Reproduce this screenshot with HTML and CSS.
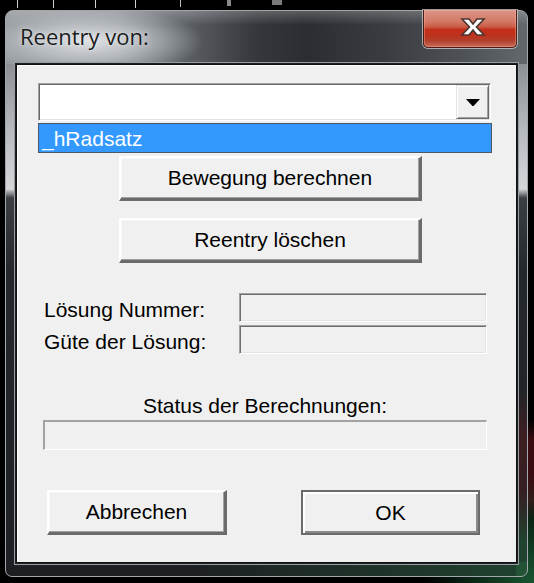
FILE: index.html
```html
<!DOCTYPE html>
<html lang="de">
<head>
<meta charset="utf-8">
<title>Reentry von:</title>
<link rel="stylesheet" href="styles.css">
</head>
<body>
<div class="window">
  <div class="titlebar">
    <span class="title">Reentry von:</span>
    <div class="close" aria-label="Schließen">
      <svg width="26" height="20" viewBox="-2 -2 26 20"><polygon points="0,0 7,0 11,5 15,0 22,0 14.5,8 22,16 15,16 11,11 7,16 0,16 7.5,8" fill="#fff" stroke="#4a3632" stroke-width="1.6" stroke-linejoin="miter"/></svg>
    </div>
  </div>
  <div class="client">
    <div class="combo">
      <div class="combo-btn">
        <svg width="14" height="7" viewBox="0 0 14 7"><polygon points="0,0 14,0 7.6,7 6.4,7" fill="#000"/></svg>
      </div>
      <div class="combo-list"><div class="combo-item">_hRadsatz</div></div>
    </div>
    <div class="btn btn-action">Bewegung berechnen</div>
    <div class="btn btn-action btn-second">Reentry löschen</div>
    <div class="rows">
      <div class="row"><span class="label">Lösung Nummer:</span><div class="field"></div></div>
      <div class="row"><span class="label">Güte der Lösung:</span><div class="field"></div></div>
    </div>
    <div class="status-label">Status der Berechnungen:</div>
    <div class="status-field"></div>
    <div class="footer">
      <div class="btn btn-cancel">Abbrechen</div>
      <div class="btn btn-ok">OK</div>
    </div>
  </div>
</div>
</body>
</html>
```

FILE: styles.css
```css
html, body {
  margin: 0;
  padding: 0;
}

body {
  width: 534px;
  height: 583px;
  overflow: hidden;
  font-family: "Liberation Sans", Arial, sans-serif;
  font-size: 21px;
  color: #000;
  background:
    linear-gradient(#cfcfcf, #cfcfcf) 17px 0 / 1px 8px no-repeat,
    linear-gradient(#cfcfcf, #cfcfcf) 53px 0 / 1px 8px no-repeat,
    linear-gradient(#cfcfcf, #cfcfcf) 95px 0 / 1px 8px no-repeat,
    linear-gradient(#cfcfcf, #cfcfcf) 135px 0 / 1px 8px no-repeat,
    linear-gradient(#bdbdbd, #bdbdbd) 180px 0 / 1px 7px no-repeat,
    linear-gradient(#8a8a8a, #8a8a8a) 227px 0 / 4px 6px no-repeat,
    linear-gradient(#7a7a7a, #7a7a7a) 272px 0 / 10px 5px no-repeat,
    radial-gradient(circle at 534px 583px, rgba(28, 95, 55, 0.9), rgba(28, 95, 55, 0) 110px),
    linear-gradient(to bottom, rgba(0,0,0,0) 420px, rgba(70, 14, 20, 0.8) 440px, rgba(70, 14, 20, 0.8) 500px, rgba(0,0,0,0) 520px) right top / 6px 100% no-repeat,
    #000;
}

/* ---------- window frame ---------- */
.window {
  box-sizing: border-box;
  margin: 10px 0 0 5px;
  width: 523px;
  height: 567px;
  border: 1px solid #a2a7ac;
  border-radius: 8px 8px 7px 7px;
  padding: 0 10px 13px 10px;
  display: flex;
  flex-direction: column;
  background:
    linear-gradient(to bottom, rgba(0,0,0,0) 380px, rgba(95, 25, 30, 0.45) 420px, rgba(95, 25, 30, 0.35) 480px, rgba(35, 95, 60, 0.55) 530px, rgba(35, 95, 60, 0.6) 100%) right top / 11px 100% no-repeat,
    linear-gradient(to right, rgba(0,0,0,0) 35%, rgba(35, 100, 60, 0.5) 100%) left bottom / 100% 14px no-repeat,
    linear-gradient(to bottom, rgba(0,0,0,0) 0, rgba(0,0,0,0) 53px, #8c9095 53px, #b7babe 120px, #d5d7d9 178px, #3b3e42 187px, #25282b 260px, #1d1f22 100%),
    radial-gradient(ellipse 115px 36px at 82px 30px, rgba(226, 229, 232, 0.95) 0%, rgba(200, 204, 208, 0.7) 50%, rgba(160, 165, 170, 0) 100%),
    linear-gradient(to bottom, rgba(255,255,255,0.22) 0, rgba(255,255,255,0) 14px),
    linear-gradient(to right, #8f9498 0, #80858a 110px, #565a5f 190px, #34383c 250px, #2a2d31 300px, #393d41 380px, #4c5054 450px, #63686c 100%);
}

.titlebar {
  height: 53px;
  flex: none;
  margin: 0 -10px;
  padding: 0 10px 0 14px;
  display: flex;
  align-items: flex-start;
  justify-content: space-between;
}

.title {
  font-family: "Open Sans", "Noto Sans", sans-serif;
  font-size: 22px;
  line-height: 30px;
  padding-top: 10px;
  color: #1b1c1d;
  text-shadow: 0 0 6px rgba(255, 255, 255, 0.55), 0 0 2px rgba(255, 255, 255, 0.5);
}

.close {
  box-sizing: border-box;
  margin-top: -1px;
  width: 94px;
  height: 38px;
  padding: 0 0 4px 6px;
  display: flex;
  align-items: center;
  justify-content: center;
  border: 1px solid #4a1e16;
  border-top: none;
  border-radius: 0 0 5px 5px;
  box-shadow: 0 0 0 1px rgba(205, 208, 211, 0.75), inset 0 0 0 1px rgba(255, 190, 175, 0.35);
  background: linear-gradient(to bottom, #dc9686 0%, #d27a67 30%, #cb5b45 46%, #c4301a 52%, #bf2f1a 66%, #b23f2c 82%, #c86a58 100%);
}

/* ---------- client area ---------- */
.client {
  flex: 1;
  position: relative;
  display: flex;
  flex-direction: column;
  align-items: flex-start;
  background: #f0f0f0;
  border: 1px solid #0f1113;
  box-shadow: 0 0 0 1px #1c1e21, 0 0 0 2px #989da2, inset 1px 1px 0 #ffffff;
}

/* combo box */
.combo {
  box-sizing: border-box;
  position: relative;
  margin: 18px 0 0 21px;
  width: 453px;
  height: 38px;
  padding: 1px;
  display: flex;
  justify-content: flex-end;
  background: #fff;
  border: 1px solid;
  border-color: #a0a0a0 #ffffff #ffffff #a0a0a0;
  box-shadow: inset 1px 1px 0 #696969, inset -1px -1px 0 #e3e3e3;
}

.combo-btn {
  box-sizing: border-box;
  width: 33px;
  height: 34px;
  display: flex;
  align-items: center;
  justify-content: center;
  padding-top: 1px;
  background: #f0f0f0;
  border: 1px solid;
  border-color: #e3e3e3 #696969 #696969 #e3e3e3;
  box-shadow: inset 1px 1px 0 #ffffff, inset -1px -1px 0 #a0a0a0;
}

.combo-list {
  position: absolute;
  left: -1px;
  top: 39px;
  box-sizing: border-box;
  width: 454px;
  height: 30px;
  border: 1px solid #4c5868;
  background: #3399ff;
}

.combo-item {
  color: #fff;
  padding: 2px 0 0 3px;
  line-height: 26px;
  white-space: nowrap;
}

/* buttons */
.btn {
  box-sizing: border-box;
  height: 45px;
  display: flex;
  align-items: center;
  justify-content: center;
  line-height: 24px;
  white-space: nowrap;
  background: #f0f0f0;
  border-style: solid;
  border-width: 2px 3px 3px 2px;
  border-color: #ffffff #6b6b6b #6b6b6b #ffffff;
  box-shadow: inset -1px -1px 0 #a0a0a0, inset 1px 1px 0 #f8f8f8;
}

.btn-action {
  width: 303px;
  margin: 35px 0 0 102px;
}

.btn-second {
  margin-top: 17px;
}

.footer {
  display: flex;
  gap: 74px;
  margin: 40px 0 0 30px;
}

.btn-cancel {
  width: 180px;
}

.btn-ok {
  width: 179px;
  border-width: 2px;
  border-color: #6b6b6b;
  box-shadow: inset 2px 2px 0 #ffffff, inset -2px -2px 0 #8a8a8a;
}

/* label rows */
.rows {
  display: flex;
  flex-direction: column;
  gap: 3px;
  margin: 30px 0 0 27px;
}

.row {
  display: flex;
  align-items: flex-start;
}

.label {
  width: 195px;
  padding-top: 5px;
  line-height: 24px;
  white-space: nowrap;
}

.field {
  box-sizing: border-box;
  width: 248px;
  height: 29px;
  background: #f0f0f0;
  border: 1px solid;
  border-color: #a0a0a0 #ffffff #ffffff #a0a0a0;
  box-shadow: inset 1px 1px 0 #6e6e6e, inset -1px -1px 0 #e3e3e3;
}

.status-label {
  align-self: stretch;
  margin-top: 40px;
  padding-right: 3px;
  text-align: center;
  line-height: 24px;
  white-space: nowrap;
}

.status-field {
  box-sizing: border-box;
  margin: 2px 0 0 26px;
  width: 444px;
  height: 30px;
  background: #f0f0f0;
  border-style: solid;
  border-width: 2px 1px 1px 2px;
  border-color: #a3a3a3 #ffffff #ffffff #a3a3a3;
}
```
